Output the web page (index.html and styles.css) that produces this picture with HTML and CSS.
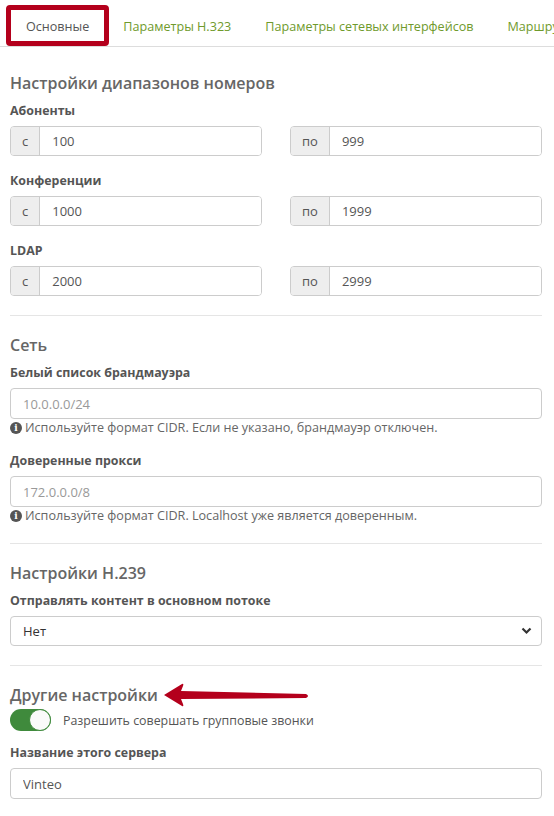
FILE: index.html
```html
<!DOCTYPE html>
<html>
<head>
  <meta charset="utf-8">
  <title>Настройки сервера</title>
  <link rel="stylesheet" href="styles.css">
</head>
<body>

  <!-- Вкладки -->
  <div class="tabs-wrap">
    <ul class="tabs">
      <li class="tab active"><a>Основные</a></li>
      <li class="tab"><a>Параметры H.323</a></li>
      <li class="tab"><a>Параметры сетевых интерфейсов</a></li>
      <li class="tab"><a>Маршру</a></li>
    </ul>
  </div>
  <div class="tab-mark"></div>

  <div class="content">

    <!-- Диапазоны номеров -->
    <h4 class="section-title first">Настройки диапазонов номеров</h4>

    <div class="form-group">
      <label>Абоненты</label>
      <div class="range">
        <div class="input-group"><span class="addon">с</span><input type="text" value="100"></div>
        <div class="input-group"><span class="addon">по</span><input type="text" value="999"></div>
      </div>
    </div>

    <div class="form-group">
      <label>Конференции</label>
      <div class="range">
        <div class="input-group"><span class="addon">с</span><input type="text" value="1000"></div>
        <div class="input-group"><span class="addon">по</span><input type="text" value="1999"></div>
      </div>
    </div>

    <div class="form-group last">
      <label>LDAP</label>
      <div class="range">
        <div class="input-group"><span class="addon">с</span><input type="text" value="2000"></div>
        <div class="input-group"><span class="addon">по</span><input type="text" value="2999"></div>
      </div>
    </div>

    <hr>

    <!-- Сеть -->
    <h4 class="section-title">Сеть</h4>

    <div class="form-group">
      <label>Белый список брандмауэра</label>
      <input type="text" class="form-control" placeholder="10.0.0.0/24">
      <p class="help"><span class="info">i</span>Используйте формат CIDR. Если не указано, брандмауэр отключен.</p>
    </div>

    <div class="form-group last">
      <label>Доверенные прокси</label>
      <input type="text" class="form-control" placeholder="172.0.0.0/8">
      <p class="help"><span class="info">i</span>Используйте формат CIDR. Localhost уже является доверенным.</p>
    </div>

    <hr>

    <!-- H.239 -->
    <h4 class="section-title">Настройки H.239</h4>

    <div class="form-group last">
      <label>Отправлять контент в основном потоке</label>
      <div class="select">
        <span>Нет</span>
        <svg width="11" height="8" viewBox="0 0 11 8"><path d="M1.5 1.5 L5.5 5.5 L9.5 1.5" fill="none" stroke="#333" stroke-width="2.2"/></svg>
      </div>
    </div>

    <hr>

    <!-- Прочее -->
    <h4 class="section-title tight">Другие настройки</h4>

    <div class="switch-row">
      <span class="switch"><span class="knob"></span></span>
      <span class="switch-label">Разрешить совершать групповые звонки</span>
    </div>

    <div class="form-group">
      <label>Название этого сервера</label>
      <input type="text" class="form-control" value="Vinteo">
    </div>

  </div>

  <!-- стрелка-указатель -->
  <svg class="pointer" width="160" height="30" viewBox="0 0 160 30">
    <path d="M4 13 L22 2 Q24 1 23 4 L21 9 L146 12 Q150 14 146 16 L21 17 L23 22 Q24 25 22 24 Z" fill="#b4001c"/>
  </svg>

</body>
</html>
```

FILE: styles.css
```css
body {
  margin: 0;
  font-family: "Open Sans", "Noto Sans", sans-serif;
  font-size: 13px;
  color: #555;
  background: #fff;
  position: relative;
  overflow: hidden;
}

/* вкладки */
.tabs-wrap {
  overflow: hidden;
  border-bottom: 1px solid #ddd;
}

.tabs {
  list-style: none;
  margin: 0 0 -1px;
  padding: 5px 0 0 10px;
  display: flex;
  white-space: nowrap;
}

.tab {
  margin-right: 2px;
  flex-shrink: 0;
}

.tab a {
  display: block;
  padding: 10px 15px 9px;
  line-height: 21px;
  font-size: 12.6px;
  color: #6f9a2c;
  border: 1px solid transparent;
  border-radius: 4px 4px 0 0;
}

.tab.active a {
  color: #555;
  background: #fff;
  border-color: #ddd #ddd #fff;
}

.tab-mark {
  position: absolute;
  left: 6px;
  top: 5px;
  width: 93px;
  height: 31px;
  border: 5px solid #b4001c;
  border-radius: 4px;
}

.content {
  padding: 0 12px 0 10px;
}

.section-title {
  margin: 19px 0 10px;
  font-size: 16px;
  line-height: 20px;
  font-weight: 600;
  color: #666;
}

.section-title.first {
  margin-top: 26px;
}

.section-title.tight {
  margin: 19px 0 4px;
}

.form-group {
  margin-bottom: 17px;
}

.form-group.last {
  margin-bottom: 19px;
}

label {
  display: block;
  font-size: 12.4px;
  line-height: 16px;
  font-weight: bold;
  margin-bottom: 7px;
}

.range {
  display: flex;
  gap: 28px;
}

.input-group {
  flex: 1;
  display: flex;
  height: 30px;
  border: 1px solid #ccc;
  border-radius: 4px;
  box-sizing: border-box;
  overflow: hidden;
}

.addon {
  background: #eee;
  border-right: 1px solid #ccc;
  padding: 0 11px;
  display: flex;
  align-items: center;
  color: #555;
}

.input-group input {
  flex: 1;
  min-width: 0;
  border: none;
  outline: none;
  padding: 0 12px;
  font: inherit;
  color: #555;
}

.form-control {
  display: block;
  width: 100%;
  height: 31px;
  box-sizing: border-box;
  border: 1px solid #ccc;
  border-radius: 4px;
  padding: 0 12px;
  font: inherit;
  color: #555;
}

.form-control::placeholder {
  color: #999;
}

.help {
  margin: 1px 0 0;
  line-height: 16px;
  font-size: 12.6px;
  color: #666;
  display: flex;
  align-items: center;
}

.info {
  display: inline-flex;
  justify-content: center;
  align-items: center;
  width: 12px;
  height: 12px;
  border-radius: 50%;
  background: #555;
  color: #fff;
  font-size: 9px;
  font-weight: bold;
  font-family: "DejaVu Serif", serif;
  margin-right: 3px;
}

.select {
  height: 30px;
  box-sizing: border-box;
  border: 1px solid #ccc;
  border-radius: 4px;
  padding: 0 9px 0 12px;
  display: flex;
  align-items: center;
  justify-content: space-between;
  color: #333;
}

hr {
  border: none;
  border-top: 1px solid #e5e5e5;
  margin: 0;
}

/* переключатель */
.switch-row {
  display: flex;
  align-items: center;
  margin: 0 0 14px;
}

.switch {
  width: 41px;
  height: 22px;
  box-sizing: border-box;
  border-radius: 11px;
  background: #3f8a3c;
  position: relative;
}

.knob {
  position: absolute;
  right: 0;
  top: 0;
  width: 22px;
  height: 22px;
  box-sizing: border-box;
  border-radius: 50%;
  background: #fafafa;
  border: 1px solid #3f8a3c;
}

.switch-label {
  margin-left: 12px;
  font-size: 12.4px;
  color: #555;
}

.pointer {
  position: absolute;
  left: 160px;
  top: 682px;
}
```
